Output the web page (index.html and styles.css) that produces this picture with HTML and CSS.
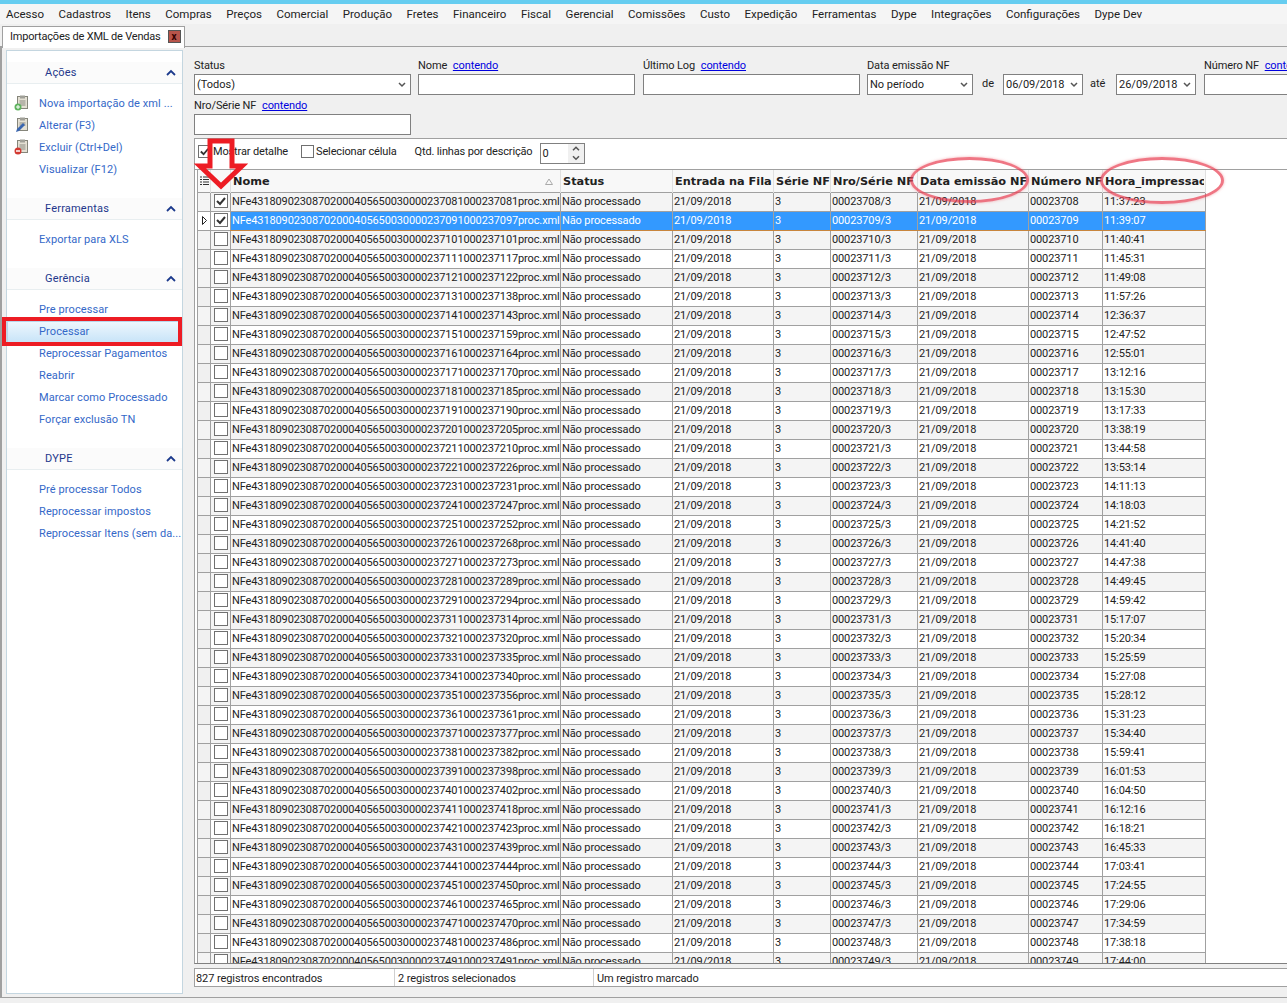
FILE: index.html
```html
<!DOCTYPE html>
<html lang="pt-BR">
<head>
  <meta charset="UTF-8"/>
  <title>Importações de XML de Vendas</title>
  <link rel="stylesheet" href="styles.css">
</head>
<body>

  <!-- MENU -->
  <div class="menubar">
    <a>Acesso</a><a>Cadastros</a><a>Itens</a><a>Compras</a><a>Preços</a><a>Comercial</a><a>Produção</a><a>Fretes</a><a>Financeiro</a><a>Fiscal</a><a>Gerencial</a><a>Comissões</a><a>Custo</a><a>Expedição</a><a>Ferramentas</a><a>Dype</a><a>Integrações</a><a>Configurações</a><a>Dype Dev</a>
  </div>

  <!-- TABS -->
  <div class="tabstrip">
    <div class="tab">
      <span>Importações de XML de Vendas</span>
      <span class="tab-close">x</span>
    </div>
  </div>

  <div class="window">

    <!-- SIDEBAR -->
    <div class="sidebar">
      <div class="group">
        <div class="group-head"><span>Ações</span><svg class="chev" viewBox="0 0 10 7"><path d="M1 6 5 2l4 4" /></svg></div>
        <div class="group-items">
          <a class="item"><svg class="ico" viewBox="0 0 16 16"><rect x="3.500" y="1.500" width="10" height="12" fill="#e4e0d4" stroke="#85857a"/><rect x="6" y="0.500" width="5" height="3" fill="#a0a098"/><path d="M5.500 6h6M5.500 8h6M5.500 10h6" stroke="#8a8a80"/><circle cx="4" cy="12" r="3.500" fill="#5fb35f"/><path d="M2 12h4M4 10v4" stroke="#fff"/></svg>Nova importação de xml ...</a>
          <a class="item"><svg class="ico" viewBox="0 0 16 16"><rect x="3.500" y="1.500" width="10" height="12" fill="#e4e0d4" stroke="#85857a"/><rect x="6" y="0.500" width="5" height="3" fill="#a0a098"/><path d="M5.500 6h6M5.500 8h6" stroke="#8a8a80"/><path d="M2 15l1-3 6-6 2 2-6 6z" fill="#3a66b0"/></svg>Alterar (F3)</a>
          <a class="item"><svg class="ico" viewBox="0 0 16 16"><rect x="3.500" y="1.500" width="10" height="12" fill="#e4e0d4" stroke="#85857a"/><rect x="6" y="0.500" width="5" height="3" fill="#a0a098"/><path d="M5.500 6h6M5.500 8h6M5.500 10h6" stroke="#8a8a80"/><circle cx="4" cy="12" r="3.500" fill="#d23a32"/><path d="M2 12h4" stroke="#fff" stroke-width="1.500"/></svg>Excluir (Ctrl+Del)</a>
          <a class="item">Visualizar (F12)</a>
        </div>
      </div>
      <div class="group">
        <div class="group-head"><span>Ferramentas</span><svg class="chev" viewBox="0 0 10 7"><path d="M1 6 5 2l4 4" /></svg></div>
        <div class="group-items">
          <a class="item">Exportar para XLS</a>
        </div>
      </div>
      <div class="group">
        <div class="group-head"><span>Gerência</span><svg class="chev" viewBox="0 0 10 7"><path d="M1 6 5 2l4 4" /></svg></div>
        <div class="group-items">
          <a class="item">Pre processar</a>
          <a class="item hot">Processar</a>
          <a class="item">Reprocessar Pagamentos</a>
          <a class="item">Reabrir</a>
          <a class="item">Marcar como Processado</a>
          <a class="item">Forçar exclusão TN</a>
        </div>
      </div>
      <div class="group">
        <div class="group-head"><span>DYPE</span><svg class="chev" viewBox="0 0 10 7"><path d="M1 6 5 2l4 4" /></svg></div>
        <div class="group-items">
          <a class="item">Pré processar Todos</a>
          <a class="item">Reprocessar impostos</a>
          <a class="item">Reprocessar Itens (sem da...</a>
        </div>
      </div>
    </div>

    <!-- MAIN -->
    <div class="main">
      <div class="filters">
        <div class="filter-row">
          <div class="field w217">
            <label>Status</label>
            <div class="combo">(Todos)<svg class="arrow" viewBox="0 0 8 6"><path d="M1 1l3 3 3-3"/></svg></div>
          </div>
          <div class="field w217 gap8">
            <label>Nome <a href="#">contendo</a></label>
            <div class="combo"></div>
          </div>
          <div class="field w217">
            <label>Último Log <a href="#">contendo</a></label>
            <div class="combo"></div>
          </div>
          <div class="field w106">
            <label>Data emissão NF</label>
            <div class="combo">No período<svg class="arrow" viewBox="0 0 8 6"><path d="M1 1l3 3 3-3"/></svg></div>
          </div>
          <div class="field-sep">de</div>
          <div class="field w80">
            <label>&nbsp;</label>
            <div class="combo">06/09/2018<svg class="arrow" viewBox="0 0 8 6"><path d="M1 1l3 3 3-3"/></svg></div>
          </div>
          <div class="field-sep sep-ate">até</div>
          <div class="field w80">
            <label>&nbsp;</label>
            <div class="combo">26/09/2018<svg class="arrow" viewBox="0 0 8 6"><path d="M1 1l3 3 3-3"/></svg></div>
          </div>
          <div class="field w217 numero">
            <label>Número NF <a href="#">contendo</a></label>
            <div class="combo"></div>
          </div>
        </div>
        <div class="filter-row">
          <div class="field w217">
            <label>Nro/Série NF <a href="#">contendo</a></label>
            <div class="combo"></div>
          </div>
        </div>
      </div>

      <div class="grid-panel">
        <div class="grid-tools">
          <span class="check checked"><svg viewBox="0 0 12 12"><path d="M2 6l3 3 5-6"/></svg></span>
          <span class="tool-label">Mostrar detalhe</span>
          <span class="check second"></span>
          <span class="tool-label">Selecionar célula</span>
          <span class="tool-label qtd">Qtd. linhas por descrição</span>
          <div class="spin">
            <span class="spin-val">0</span>
            <span class="spin-btns">
              <svg viewBox="0 0 16 9"><path d="M5 6l3-3 3 3"/></svg>
              <svg viewBox="0 0 16 9"><path d="M5 3l3 3 3-3"/></svg>
            </span>
          </div>
        </div>
        <div class="grid-wrap">
          <table class="grid">
            <colgroup>
              <col class="c-ind"><col class="c-chk"><col class="c-nome"><col class="c-status"><col class="c-ent"><col class="c-serie"><col class="c-nro"><col class="c-data"><col class="c-num"><col class="c-hora">
            </colgroup>
            <thead>
              <tr>
                <th class="ind"><svg class="listico" viewBox="0 0 9 11"><path d="M0 1h2M3 1h6M0 3.500h2M3 3.500h6M0 6h2M3 6h6M0 8.500h2M3 8.500h6" /></svg></th>
                <th></th>
                <th class="th-nome">Nome<svg class="sort" viewBox="0 0 8 7"><path d="M4 1 7.500 6.500H.5z"/></svg></th>
                <th>Status</th>
                <th>Entrada na Fila</th>
                <th>Série NF</th>
                <th>Nro/Série NF</th>
                <th>Data emissão NF</th>
                <th>Número NF</th>
                <th><span class="th-clip">Hora_impressao</span></th>
              </tr>
            </thead>
            <tbody id="rows"></tbody>
          </table>
        </div>
        <div class="statusbar">
          <div class="sb-a">827 registros encontrados</div>
          <div class="sb-b">2 registros selecionados</div>
          <div class="sb-c">Um registro marcado</div>
        </div>
      </div>
    </div>
  </div>

  <!-- RED MARKS DRAWN OVER THE SCREENSHOT -->
  <div class="mark-box"></div>
  <svg class="mark-arrow" viewBox="0 0 54 54"><path d="M16 3h22v25h10L27 48 6 28h10z"/></svg>
  <div class="mark-oval oval-a"></div>
  <div class="mark-oval oval-b"></div>

  <script src="app.js"></script>
</body>
</html>
```

FILE: styles.css
```css
/* GLOBAL STYLES */
* {
  margin: 0;
  padding: 0;
  box-sizing: border-box;
}
html, body {
  height: 1003px;
  overflow: hidden;
}
body {
  position: relative;
  font-family: Roboto, "Noto Sans", sans-serif;
  font-size: 11px;
  color: #222;
  background: #f0f0f0;
  border-top: 4px solid #66cdf0;
}
/* MENU */
.menubar {
  display: flex;
  height: 20px;
  padding-left: 6px;
  gap: 14.500px;
  align-items: center;
  font-size: 11.500px;
  background: #f5f5f5;
}
/* TABS */
.tabstrip {
  height: 23px;
  padding: 2px 0 0 2px;
  border-bottom: 1px solid #a0a0a0;
}
.tab {
  display: flex;
  align-items: center;
  gap: 7px;
  width: 183px;
  height: 22px;
  padding: 0 0 2px 7px;
  font-size: 11px;
  letter-spacing: -0.2px;
  white-space: nowrap;
  background: #fff;
  border: 1px solid #a0a0a0;
  border-bottom: none;
}
.tab-close {
  flex: none;
  width: 13px;
  height: 13px;
  line-height: 11px;
  text-align: center;
  font-size: 10px;
  font-weight: bold;
  color: #300;
  background: #b8544a;
  border: 1px solid #555;
}
.window {
  display: flex;
  height: 951px;
  padding: 3px 0 0 6px;
  border-bottom: 1px solid #a0a0a0;
  border-left: 2px solid #a0a0a0;
}
/* SIDEBAR */
.sidebar {
  width: 177px;
  margin-left: -2px;
  height: 944px;
  background: #fff;
  border: 1px solid #c4d6e0;
  padding-top: 11px;
}
.group {
  margin-bottom: 17px;
}
.group-head {
  display: flex;
  justify-content: space-between;
  align-items: center;
  height: 22px;
  padding: 0 6px 0 38px;
  font-size: 11px;
  letter-spacing: 0.2px;
  color: #24388c;
  background: #fbfbfb;
  border-bottom: 1px solid #e8eef0;
}
.chev {
  width: 10px;
  height: 7px;
}
.chev path {
  fill: none;
  stroke: #1c3a8c;
  stroke-width: 1.800;
}
.group-items {
  padding-top: 9px;
}
.item {
  position: relative;
  display: block;
  height: 22px;
  line-height: 22px;
  padding-left: 32px;
  letter-spacing: 0.1px;
  color: #3468c8;
  white-space: nowrap;
  overflow: hidden;
}
.ico {
  position: absolute;
  left: 7px;
  top: 2px;
  width: 16px;
  height: 16px;
}
.item.hot {
  background: linear-gradient(#eef7fd, #c8e4f8);
  border: 1px solid #b8d6ec;
  padding-left: 31px;
  line-height: 20px;
}
/* MAIN */
.main {
  flex: 1;
  min-width: 0;
  padding-left: 11px;
  display: flex;
  flex-direction: column;
}
/* FILTERS */
.filters {
  height: 88px;
  padding-top: 7px;
}
.filter-row {
  display: flex;
  height: 40px;
  white-space: nowrap;
}
.field {
  flex: none;
  margin-right: 7px;
}
.gap8 {
  margin-right: 8px;
}
.field label {
  display: block;
  height: 17px;
  line-height: 17px;
  letter-spacing: -0.1px;
}
.field label a {
  color: #0000e0;
  margin-left: 3px;
}
.w217 { width: 217px; }
.w106 { width: 106px; margin-right: 9px; }
.w80 { width: 80px; }
.numero { margin-left: 1px; }
.field-sep {
  flex: none;
  width: 21px;
  padding-top: 20px;
}
.sep-ate {
  width: 26px;
}
.combo {
  position: relative;
  height: 21px;
  line-height: 19px;
  padding-left: 2px;
  background: #fff;
  border: 1px solid #808080;
}
.arrow {
  position: absolute;
  right: 4px;
  top: 7px;
  width: 8px;
  height: 6px;
}
.arrow path, .spin-btns path {
  fill: none;
  stroke: #555;
  stroke-width: 1.500;
}
/* GRID PANEL */
.grid-panel {
  flex: 1;
  min-height: 0;
}
.grid-tools {
  display: flex;
  align-items: center;
  height: 32px;
  padding: 0 0 5px 3px;
  background: #fff;
  border: 1px solid #a0a0a0;
  border-right: none;
}
.check {
  display: inline-block;
  width: 13px;
  height: 13px;
  background: #fff;
  border: 1px solid #707070;
}
.check svg {
  display: block;
}
.check path {
  fill: none;
  stroke: #333;
  stroke-width: 2;
}
.tool-label {
  margin-left: 2px;
  letter-spacing: -0.15px;
}
.second {
  margin-left: 13px;
}
.qtd {
  margin-left: 18px;
}
.spin {
  display: flex;
  width: 45px;
  height: 21px;
  margin: 3px 0 0 7px;
  border: 1px solid #808080;
}
.spin-val {
  flex: 1;
  padding-left: 2px;
  line-height: 19px;
}
.spin-btns {
  display: flex;
  flex-direction: column;
  width: 16px;
  background: #f0f0f0;
}
.spin-btns svg {
  height: 9.500px;
  width: 16px;
}
/* DATA GRID */
.grid-wrap {
  height: 794px;
  padding-left: 2px;
  overflow: hidden;
  background: #fff;
  border-left: 1px solid #a0a0a0;
  border-bottom: 1px solid #808080;
}
.grid {
  table-layout: fixed;
  width: 1008px;
  border-collapse: collapse;
  border-left: 1px solid #a0a0a0;
}
.c-ind { width: 13px; }
.c-chk { width: 20px; }
.c-nome { width: 330px; }
.c-status { width: 112px; }
.c-ent { width: 101px; }
.c-serie { width: 57px; }
.c-nro { width: 87px; }
.c-data { width: 111px; }
.c-num { width: 74px; }
.c-hora { width: 103px; }
.grid th {
  height: 22px;
  padding: 2px 0 0 2px;
  text-align: left;
  font-family: "DejaVu Sans", sans-serif;
  font-size: 11.300px;
  white-space: nowrap;
  overflow: hidden;
  background: #f8f8f8;
  border-right: 1px solid #e0e0e0;
}
.th-clip {
  display: block;
  width: 99px;
  overflow: hidden;
}
.listico {
  display: block;
  width: 9px;
  height: 11px;
}
.listico path {
  stroke: #333;
}
.th-nome {
  position: relative;
}
.sort {
  position: absolute;
  right: 7px;
  top: 8px;
  width: 8px;
  height: 7px;
}
.sort path {
  fill: none;
  stroke: #aaa;
}
.grid td {
  height: 19px;
  padding-left: 1px;
  line-height: 16px;
  letter-spacing: -0.12px;
  white-space: nowrap;
  overflow: hidden;
  background: #fff;
  border: 1px solid #a0a0a0;
}
.grid tr.alt td {
  background: #f4f4f4;
}
.grid td.rowhead {
  padding: 0;
  background: #f0f0f0;
}
.grid td.cellchk {
  padding: 0 0 1px 3px;
}
.grid td.cellchk .check {
  display: block;
  width: 14px;
  height: 14px;
}
.grid tr.sel td {
  color: #fff;
  background: #3399ff;
  border-top-color: #c8853c;
  border-bottom-color: #c8853c;
}
.grid tr.sel td.rowhead {
  color: #222;
  background: #fff;
  border-color: #a0a0a0;
}
.grid tr.sel td.cellchk {
  color: #222;
  background: #fff;
  border: 1px dotted #222;
}
.cursor {
  display: block;
  width: 5px;
  height: 9px;
  margin-left: 4px;
}
.cursor path {
  fill: #fff;
  stroke: #222;
}
/* STATUS BAR */
.statusbar {
  display: flex;
  height: 19px;
  margin-top: 4px;
  line-height: 20px;
  letter-spacing: -0.08px;
  background: #fff;
  border: 1px solid #a0a0a0;
  border-right: none;
}
.sb-a {
  width: 200px;
  padding-left: 1px;
  border-right: 1px solid #d0d0d0;
}
.sb-b {
  width: 199px;
  padding-left: 3px;
  border-right: 1px solid #d0d0d0;
}
.sb-c {
  padding-left: 3px;
}
/* RED MARKS */
.mark-box {
  position: absolute;
  left: 2px;
  top: 313px;
  width: 180px;
  height: 29px;
  border: 4px solid #ed1c24;
}
.mark-arrow {
  position: absolute;
  left: 194px;
  top: 134px;
  width: 54px;
  height: 54px;
}
.mark-arrow path {
  fill: none;
  stroke: #ed1c24;
  stroke-width: 5;
}
.mark-oval {
  position: absolute;
  border: 3px solid rgba(232, 60, 80, 0.7);
  border-radius: 50%;
  box-shadow: 0 0 3px rgba(240, 120, 130, 0.6);
}
.oval-a {
  left: 910px;
  top: 153px;
  width: 119px;
  height: 46px;
}
.oval-b {
  left: 1100px;
  top: 153px;
  width: 124px;
  height: 47px;
}
```

FILE: app.js
```js
// GRID ROWS
const codes = [
  ['23708','1000237081','11:37:23'],['23709','1000237097','11:39:07'],['23710','1000237101','11:40:41'],
  ['23711','1000237117','11:45:31'],['23712','1000237122','11:49:08'],['23713','1000237138','11:57:26'],
  ['23714','1000237143','12:36:37'],['23715','1000237159','12:47:52'],['23716','1000237164','12:55:01'],
  ['23717','1000237170','13:12:16'],['23718','1000237185','13:15:30'],['23719','1000237190','13:17:33'],
  ['23720','1000237205','13:38:19'],['23721','1000237210','13:44:58'],['23722','1000237226','13:53:14'],
  ['23723','1000237231','14:11:13'],['23724','1000237247','14:18:03'],['23725','1000237252','14:21:52'],
  ['23726','1000237268','14:41:40'],['23727','1000237273','14:47:38'],['23728','1000237289','14:49:45'],
  ['23729','1000237294','14:59:42'],['23731','1000237314','15:17:07'],['23732','1000237320','15:20:34'],
  ['23733','1000237335','15:25:59'],['23734','1000237340','15:27:08'],['23735','1000237356','15:28:12'],
  ['23736','1000237361','15:31:23'],['23737','1000237377','15:34:40'],['23738','1000237382','15:59:41'],
  ['23739','1000237398','16:01:53'],['23740','1000237402','16:04:50'],['23741','1000237418','16:12:16'],
  ['23742','1000237423','16:18:21'],['23743','1000237439','16:45:33'],['23744','1000237444','17:03:41'],
  ['23745','1000237450','17:24:55'],['23746','1000237465','17:29:06'],['23747','1000237470','17:34:59'],
  ['23748','1000237486','17:38:18'],['23749','1000237491','17:44:00']
];
const tick = '<svg viewBox="0 0 12 12"><path d="M2 6l3 3 5-6"/></svg>';
const cursor = '<svg class="cursor" viewBox="0 0 5 9"><path d="M.5.5 4.500 4.500.5 8.500z"/></svg>';

document.getElementById('rows').innerHTML = codes.map((r, i) => {
  const cls = (i === 1 ? 'sel' : '') + (i % 2 === 0 ? ' alt' : '');
  return `<tr class="${cls}">
    <td class="rowhead">${i === 1 ? cursor : ''}</td>
    <td class="cellchk"><span class="check">${i < 2 ? tick : ''}</span></td>
    <td>NFe43180902308702000405650030000${r[0]}${r[1]}proc.xml</td>
    <td>Não processado</td>
    <td>21/09/2018</td>
    <td>3</td>
    <td>000${r[0]}/3</td>
    <td>21/09/2018</td>
    <td>000${r[0]}</td>
    <td>${r[2]}</td>
  </tr>`;
}).join('');
```
